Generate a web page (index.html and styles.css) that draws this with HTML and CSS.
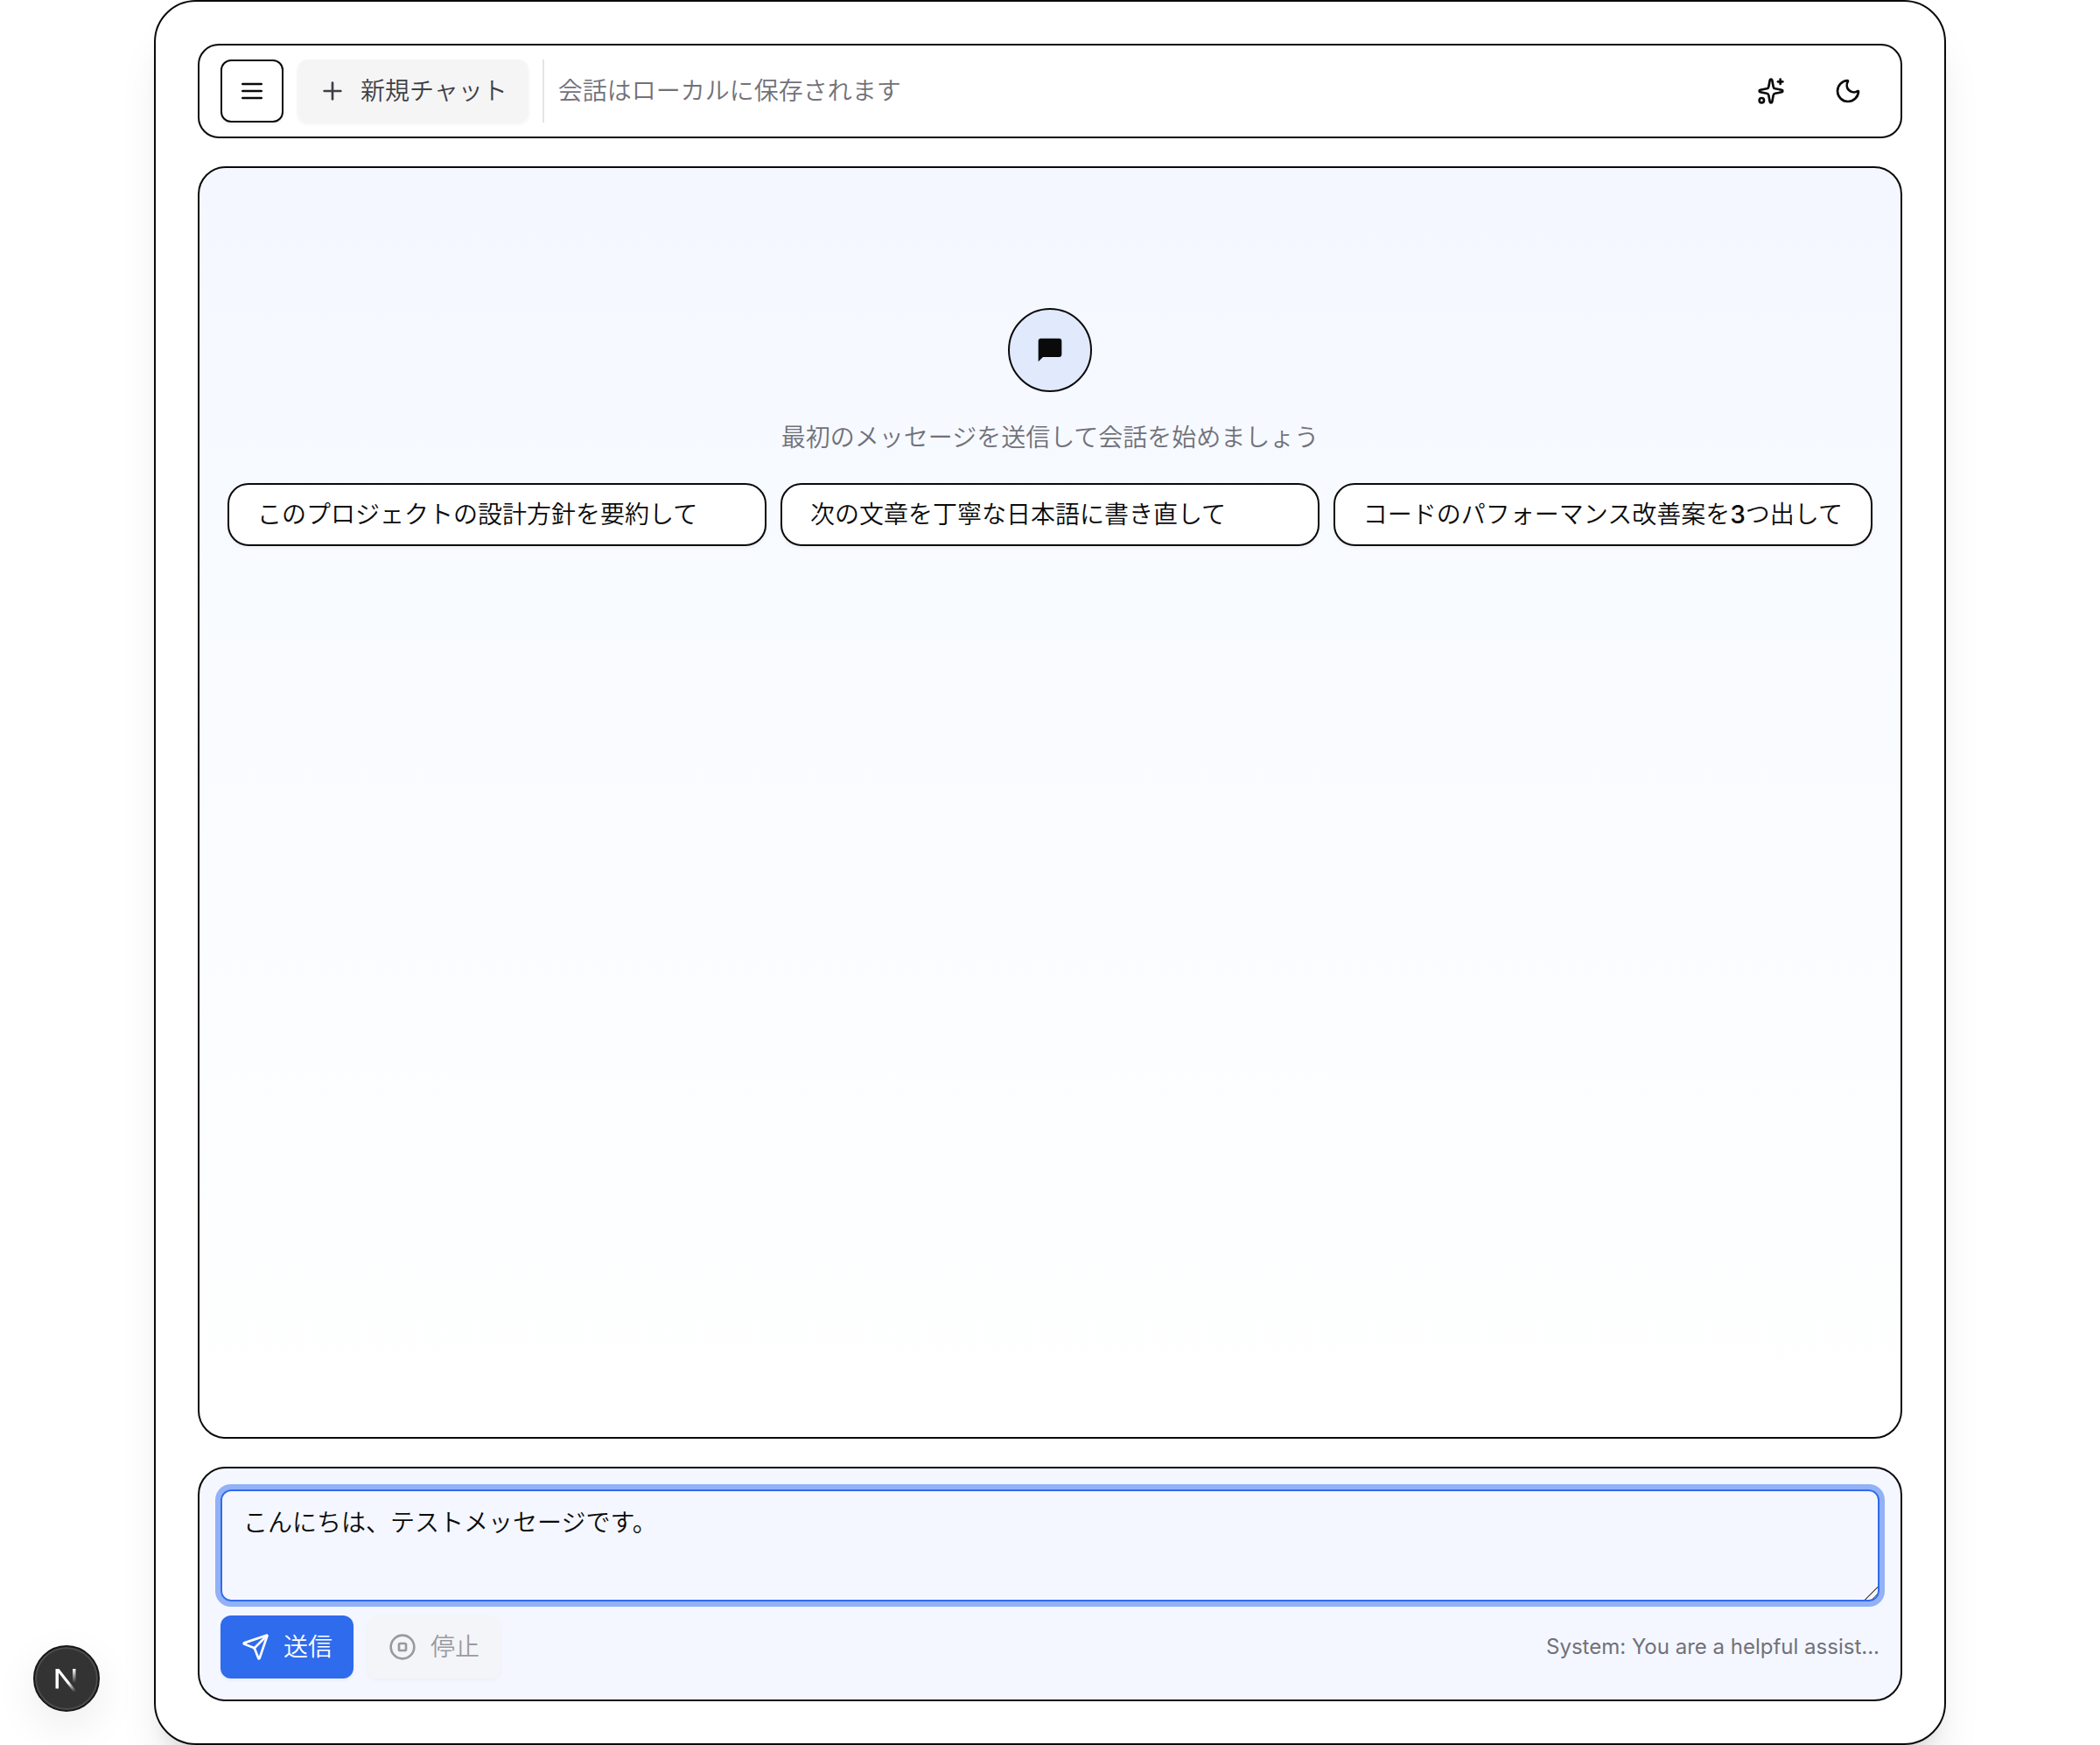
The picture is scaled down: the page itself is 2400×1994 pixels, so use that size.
FILE: index.html
```html
<!DOCTYPE html>
<html lang="ja">
<head>
<meta charset="utf-8">
<meta name="viewport" content="width=device-width, initial-scale=1">
<title>Chat</title>
<link rel="stylesheet" href="styles.css">
</head>
<body>
<main class="shell">
  <header class="toolbar">
    <button class="btn btn-icon btn-outline" type="button" aria-label="メニュー">
      <svg class="icon" viewBox="0 0 24 24"><path d="M4 6h16"/><path d="M4 12h16"/><path d="M4 18h16"/></svg>
    </button>
    <button class="btn btn-secondary" type="button">
      <svg class="icon" viewBox="0 0 24 24"><path d="M5 12h14"/><path d="M12 5v14"/></svg>
      <span>新規チャット</span>
    </button>
    <div class="divider" role="separator"></div>
    <p class="hint">会話はローカルに保存されます</p>
    <div class="toolbar-end">
      <button class="btn btn-icon btn-ghost" type="button" aria-label="AI">
        <svg class="icon" viewBox="0 0 24 24"><path d="M11.017 2.814a1 1 0 0 1 1.966 0l1.051 5.558a2 2 0 0 0 1.594 1.594l5.558 1.051a1 1 0 0 1 0 1.966l-5.558 1.051a2 2 0 0 0-1.594 1.594l-1.051 5.558a1 1 0 0 1-1.966 0l-1.051-5.558a2 2 0 0 0-1.594-1.594l-5.558-1.051a1 1 0 0 1 0-1.966l5.558-1.051a2 2 0 0 0 1.594-1.594z"/><path d="M20 2v4"/><path d="M22 4h-4"/><circle cx="4" cy="20" r="2"/></svg>
      </button>
      <button class="btn btn-icon btn-ghost" type="button" aria-label="テーマ">
        <svg class="icon" viewBox="0 0 24 24"><path d="M20.985 12.486a9 9 0 1 1-9.473-9.472c.405-.022.617.46.402.803a6 6 0 0 0 8.268 8.268c.344-.215.825-.004.803.401"/></svg>
      </button>
    </div>
  </header>

  <section class="messages">
    <div class="badge">
      <svg class="icon-solid" viewBox="0 0 24 24"><path d="M20 2H4c-1.100 0-2 .9-2 2v18l4-4h14c1.100 0 2-.9 2-2V4c0-1.100-.9-2-2-2z"/></svg>
    </div>
    <p class="hint">最初のメッセージを送信して会話を始めましょう</p>
    <div class="suggestions">
      <button class="suggestion" type="button">このプロジェクトの設計方針を要約して</button>
      <button class="suggestion" type="button">次の文章を丁寧な日本語に書き直して</button>
      <button class="suggestion" type="button">コードのパフォーマンス改善案を<span class="digit">3</span>つ出して</button>
    </div>
  </section>

  <form class="composer">
    <textarea class="prompt" aria-label="メッセージ">こんにちは、テストメッセージです。</textarea>
    <div class="actions">
      <button class="btn btn-primary" type="button">
        <svg class="icon" viewBox="0 0 24 24"><path d="M14.536 21.686a.5.5 0 0 0 .937-.024l6.5-19a.496.496 0 0 0-.635-.635l-19 6.5a.5.5 0 0 0-.024.937l7.93 3.180a2 2 0 0 1 1.112 1.110z"/><path d="m21.854 2.147-10.940 10.939"/></svg>
        <span>送信</span>
      </button>
      <button class="btn btn-secondary" type="button" disabled>
        <svg class="icon" viewBox="0 0 24 24"><circle cx="12" cy="12" r="10"/><rect x="9" y="9" width="6" height="6" rx="1"/></svg>
        <span>停止</span>
      </button>
      <p class="system">System: You are a helpful assist...</p>
    </div>
  </form>
</main>

<button class="dev-badge" type="button" aria-label="Next.js">
  <svg class="dev-mark" viewBox="0 0 40 40" fill="none">
    <defs>
      <linearGradient id="fade-diagonal" gradientUnits="userSpaceOnUse" x1="19" y1="20" x2="30" y2="35"><stop offset="0.3" stop-color="#fff"/><stop offset="1" stop-color="#fff" stop-opacity="0"/></linearGradient>
      <linearGradient id="fade-stem" gradientUnits="userSpaceOnUse" x1="28" y1="9" x2="28" y2="25"><stop stop-color="#fff"/><stop offset="1" stop-color="#fff" stop-opacity="0"/></linearGradient>
    </defs>
    <path d="M7.500 31.500V9h4L31.500 34.500l-2.500 2L11 13.500v18z" fill="url(#fade-diagonal)"/>
    <path d="M27 9h3.500v16H27z" fill="url(#fade-stem)"/>
  </svg>
</button>
</body>
</html>
```
FILE: styles.css
```css
:root {
  --ink: #0a0a0a;
  --muted: #71717a;
  --primary: #2f6bed;
  --tint: #f4f7ff;
}

* {
  box-sizing: border-box;
}

body {
  margin: 0;
  background: #fff;
  color: var(--ink);
  font-family: Inter, "Noto Sans CJK JP", sans-serif;
  font-size: 28px;
  font-weight: 350;
  line-height: 40px;
}

p {
  margin: 0;
}

button,
textarea {
  margin: 0;
  font: inherit;
  color: inherit;
}

.shell {
  display: flex;
  flex-direction: column;
  gap: 32px;
  max-width: 2048px;
  min-height: 100vh;
  margin: 0 auto;
  padding: 48px;
  border: 2px solid var(--ink);
  border-radius: 48px;
  background: #fff;
  box-shadow: 0 40px 50px -10px rgb(0 0 0 / 10%), 0 16px 20px -12px rgb(0 0 0 / 10%);
}

.toolbar {
  display: flex;
  align-items: center;
  gap: 16px;
  padding: 16px 24px;
  border: 2px solid var(--ink);
  border-radius: 24px;
}

.toolbar-end {
  display: flex;
  gap: 16px;
  margin-left: auto;
}

.btn {
  display: inline-flex;
  align-items: center;
  justify-content: center;
  gap: 16px;
  height: 72px;
  padding: 0 24px;
  border: 0;
  border-radius: 12px;
  white-space: nowrap;
}

.btn-icon {
  width: 72px;
  padding: 0;
}

.btn-outline {
  border: 2px solid var(--ink);
  background: #fff;
  box-shadow: 0 2px 4px rgb(0 0 0 / 5%);
}

.btn-ghost {
  background: transparent;
}

.btn-secondary {
  background: #f5f5f5;
  color: #3f3f46;
  box-shadow: 0 2px 4px rgb(0 0 0 / 5%);
}

.btn-primary {
  background: var(--primary);
  color: #fff;
  box-shadow: 0 2px 4px rgb(0 0 0 / 5%);
}

.btn:disabled {
  opacity: 0.5;
}

.icon {
  width: 32px;
  height: 32px;
  fill: none;
  stroke: currentColor;
  stroke-width: 2;
  stroke-linecap: round;
  stroke-linejoin: round;
}

.icon-solid {
  width: 32px;
  height: 32px;
  fill: currentColor;
}

.divider {
  width: 2px;
  height: 72px;
  background: #e4e4e7;
}

.hint {
  color: var(--muted);
}

.messages {
  display: flex;
  flex: 1;
  flex-direction: column;
  align-items: center;
  gap: 32px;
  padding: 160px 32px 32px;
  border: 2px solid var(--ink);
  border-radius: 32px;
  background: linear-gradient(to bottom, var(--tint), #f8fbff 35%, #fff);
}

.badge {
  display: grid;
  place-items: center;
  width: 96px;
  height: 96px;
  border: 2px solid var(--ink);
  border-radius: 50%;
  background: #e1eafd;
}

.suggestions {
  display: grid;
  grid-template-columns: repeat(3, 1fr);
  gap: 16px;
  width: 100%;
}

.suggestion {
  height: 72px;
  padding: 0 32px;
  border: 2px solid var(--ink);
  border-radius: 24px;
  background: #fff;
  box-shadow: 0 2px 4px rgb(0 0 0 / 5%);
  text-align: left;
  white-space: nowrap;
}

.digit {
  font-weight: 500;
}

.composer {
  display: flex;
  flex-direction: column;
  gap: 16px;
  padding: 24px;
  border: 2px solid var(--ink);
  border-radius: 32px;
  background: var(--tint);
}

.prompt {
  display: block;
  width: 100%;
  height: 128px;
  padding: 16px 24px;
  border: 2px solid var(--primary);
  border-radius: 12px;
  outline: 0;
  background: transparent;
  box-shadow: 0 0 0 6px rgb(47 107 237 / 50%);
  resize: vertical;
}

/* Larger grip: two diagonal strokes in the resize corner */
.prompt::-webkit-resizer {
  background: linear-gradient(135deg, transparent 48%, #666 48%, #666 54%, transparent 54%, transparent 74%, #666 74%, #666 80%, transparent 80%);
}

.actions {
  display: flex;
  align-items: center;
  gap: 16px;
}

.system {
  margin-left: auto;
  color: var(--muted);
  font-size: 24px;
  font-weight: 400;
  line-height: 32px;
}

.dev-badge {
  position: fixed;
  bottom: 38px;
  left: 38px;
  display: grid;
  place-items: center;
  width: 76px;
  height: 76px;
  padding: 0;
  border: 2px solid #171717;
  border-radius: 50%;
  background: #333;
  box-shadow: inset 0 0 0 2px #4d4d4d, 0 16px 48px rgb(0 0 0 / 8%);
}

.dev-mark {
  width: 40px;
  height: 40px;
}
```
